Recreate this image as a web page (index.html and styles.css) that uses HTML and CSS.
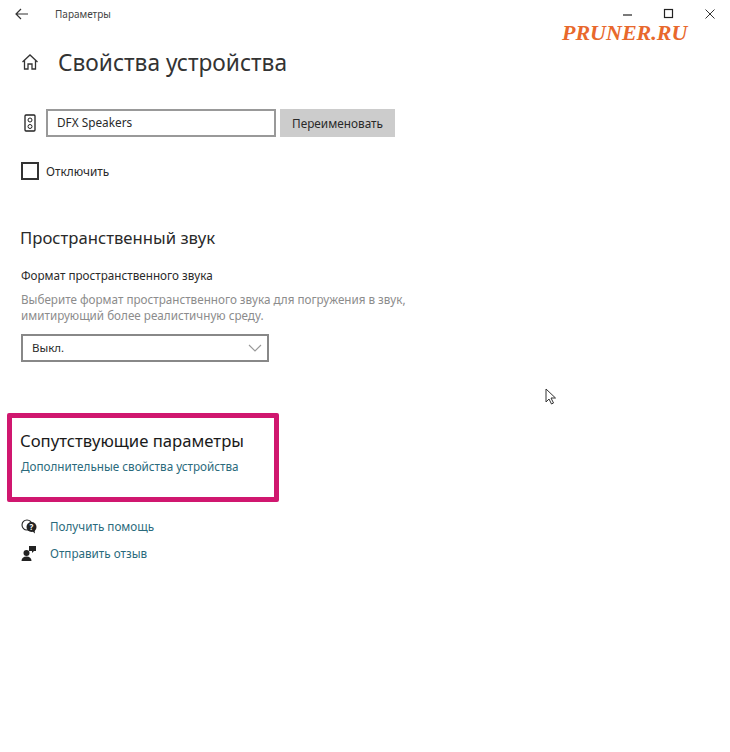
FILE: index.html
```html
<!DOCTYPE html>
<html lang="ru">
<head>
    <meta charset="UTF-8">
    <title>Параметры</title>
    <link rel="stylesheet" href="styles.css">
</head>
<body>
    <div class="titlebar">
        <svg class="back-icon" width="14" height="12" viewBox="0 0 14 12"><path d="M6 1 1 6l5 5M1 6h12" fill="none" stroke="#333" stroke-width="1.2"/></svg>
        <span class="app-name">Параметры</span>
        <div class="window-btns">
            <svg width="12" height="12" viewBox="0 0 12 12"><path d="M1 7h9" stroke="#222" stroke-width="1.2"/></svg>
            <svg width="12" height="12" viewBox="0 0 12 12"><rect x="1.5" y="1.5" width="8" height="8" fill="none" stroke="#222" stroke-width="1.2"/></svg>
            <svg width="12" height="12" viewBox="0 0 12 12"><path d="M1.5 1.5l9 9M10.500 1.500l-9 9" stroke="#333" stroke-width="1"/></svg>
        </div>
    </div>

    <div class="page-head">
        <svg width="18" height="18" viewBox="0 0 18 18"><path d="M1.500 9 9 2l7.500 7M3.500 7.500V16H7v-5h4v5h3.500V7.500" fill="none" stroke="#333" stroke-width="1.300"/></svg>
        <h1>Свойства устройства</h1>
    </div>

    <div class="rename-row">
        <svg width="12" height="18" viewBox="0 0 12 18"><rect x="1" y="1" width="10" height="16" rx="1" fill="none" stroke="#222" stroke-width="1.300"/><circle cx="6" cy="6" r="2" fill="none" stroke="#222"/><circle cx="6" cy="12.500" r="2" fill="none" stroke="#222"/></svg>
        <div class="name-input">DFX Speakers</div>
        <div class="rename-btn">Переименовать</div>
    </div>

    <label class="check-row">
        <span class="checkbox"></span>
        <span>Отключить</span>
    </label>

    <h2 class="spatial-title">Пространственный звук</h2>
    <div class="field-label">Формат пространственного звука</div>
    <p class="hint">Выберите формат пространственного звука для погружения в звук,<br>имитирующий более реалистичную среду.</p>
    <div class="select">
        <span>Выкл.</span>
        <svg width="14" height="8" viewBox="0 0 14 8"><path d="M1 1l6 6 6-6" fill="none" stroke="#999" stroke-width="1.100"/></svg>
    </div>

    <section class="related">
        <h2>Сопутствующие параметры</h2>
        <a class="link" href="#">Дополнительные свойства устройства</a>
    </section>

    <div class="help-row">
        <svg width="16" height="15" viewBox="0 0 16 15"><circle cx="6" cy="6" r="5" fill="none" stroke="#222" stroke-width="1.100"/><circle cx="10.500" cy="8" r="5" fill="#222"/><path d="M11 12l3 2.500-.5-4z" fill="#222"/><text x="10.500" y="11" class="help-q">?</text></svg>
        <a class="link" href="#">Получить помощь</a>
    </div>
    <div class="help-row feedback">
        <svg width="16" height="16" viewBox="0 0 16 16"><circle cx="5.500" cy="8" r="3" fill="#222"/><path d="M.5 16c0-3 2-4.500 5-4.500s5 1.500 5 4.500z" fill="#222"/><path d="M8 1h7v5h-2l-2 2V6H8z" fill="#222"/></svg>
        <a class="link" href="#">Отправить отзыв</a>
    </div>

    <div class="watermark">PRUNER.RU</div>
    <svg class="cursor" width="12" height="18" viewBox="0 0 12 18"><path d="M1 1v13l3-3 2.500 5 2-1-2.500-5h4.500z" fill="#fff" stroke="#333"/></svg>
</body>
</html>
```

FILE: styles.css
```css
body {
    margin: 0;
    height: 752px;
    position: relative;
    overflow: hidden;
    background: #fff;
    color: #2a2a2a;
    font-family: "Noto Sans", "Open Sans", sans-serif;
    font-size: 11.800px;
}
h1, h2, p {
    margin: 0;
    font-weight: normal;
}

.titlebar {
    display: flex;
    align-items: center;
    height: 28px;
    padding-left: 15px;
}
.app-name {
    margin-left: 26px;
    font-size: 10px;
    color: #444;
}
.window-btns {
    margin-left: auto;
    margin-right: 14px;
    display: flex;
    gap: 29px;
}

.page-head {
    display: flex;
    align-items: center;
    gap: 19px;
    margin: 15px 0 0 21px;
    height: 38px;
}
.page-head h1 {
    font-size: 22.700px;
    color: #333;
}

.rename-row {
    display: flex;
    align-items: center;
    margin: 28px 0 0 24px;
}
.name-input {
    box-sizing: border-box;
    width: 230px;
    height: 28px;
    margin-left: 10px;
    padding-left: 9px;
    line-height: 22px;
    border: 2px solid #999;
}
.rename-btn {
    width: 115px;
    height: 28px;
    margin-left: 4px;
    line-height: 29px;
    text-align: center;
    background: #ccc;
}

.check-row {
    display: flex;
    align-items: center;
    gap: 7px;
    margin: 25px 0 0 21px;
}
.checkbox {
    box-sizing: border-box;
    width: 18px;
    height: 18px;
    border: 2px solid #333;
}

.spatial-title {
    margin: 46px 0 0 20px;
    font-size: 16.700px;
}
.field-label {
    margin: 18px 0 0 21px;
    font-size: 11.700px;
}
.hint {
    margin: 9px 0 0 21px;
    font-size: 11.680px;
    line-height: 16px;
    color: #8c8c8c;
}
.select {
    box-sizing: border-box;
    display: flex;
    align-items: center;
    justify-content: space-between;
    width: 248px;
    height: 28px;
    margin: 10px 0 0 21px;
    padding: 0 5px 1px 9px;
    border: 2px solid #888;
    font-size: 11.500px;
}

.related {
    box-sizing: border-box;
    width: 272px;
    height: 89px;
    margin: 51px 0 0 7px;
    padding: 11px 0 0 8px;
    border: 5px solid #d0176f;
    border-radius: 2px;
}
.related h2 {
    font-size: 16.700px;
    color: #1a1a1a;
}
.link {
    color: #2a6a7c;
    text-decoration: none;
    font-size: 11.700px;
}
.related .link {
    display: block;
    margin: 6px 0 0 1px;
}

.help-row {
    display: flex;
    align-items: center;
    gap: 13px;
    margin: 16px 0 0 21px;
}
.help-q {
    font-size: 8px;
    font-weight: bold;
    fill: #fff;
    text-anchor: middle;
}
.feedback {
    margin-top: 11px;
}

/* stuck on top of the screenshot */
.watermark {
    position: absolute;
    top: 20px;
    left: 562px;
    font-family: "Liberation Serif", serif;
    font-size: 22px;
    font-weight: bold;
    font-style: italic;
    color: #e8682c;
}
.cursor {
    position: absolute;
    top: 388px;
    left: 545px;
}
```
